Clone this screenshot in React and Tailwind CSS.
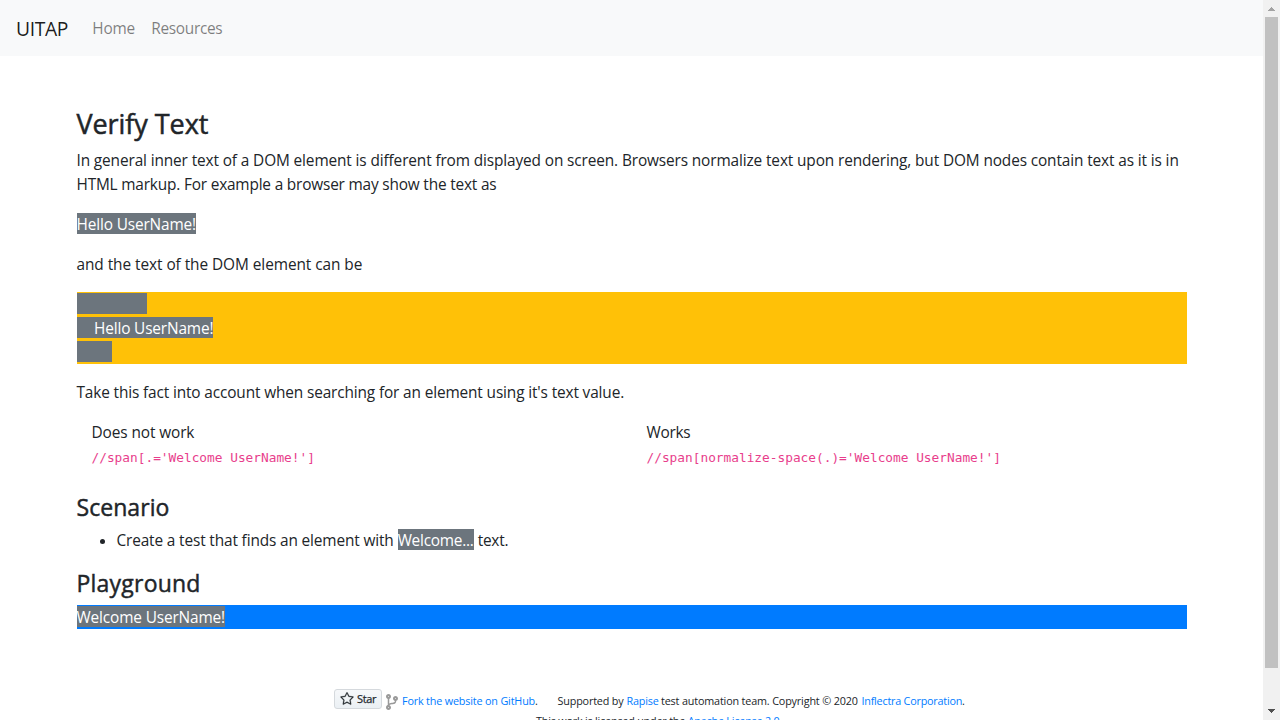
import { GoStar } from "react-icons/go";
import { FaCodeBranch } from "react-icons/fa";

function Mark({ className = "", children }) {
  return <span className={`inline-block h-[21px] bg-[#6c757d] leading-[23px] text-white ${className}`}>{children}</span>;
}

function Link({ className = "", children }) {
  return <a href="#" className={`text-[#007bff] ${className}`}>{children}</a>;
}

function Navbar() {
  return (
    <nav className="flex h-14 items-center bg-[#f8f9fa] px-4 pt-0.5">
      <a href="#" className="mr-4 w-[52.3px] text-[19.25px] tracking-[-0.36px] text-black/90">UITAP</a>
      <a href="#" className="w-[59px] px-2 tracking-[-0.25px] text-black/50">Home</a>
      <a href="#" className="px-2 tracking-[-0.31px] text-black/50">Resources</a>
    </nav>
  );
}

function Scrollbar() {
  return (
    <div className="flex h-full w-[17px] shrink-0 flex-col items-center bg-[#f1f1f1]">
      <svg width="17" height="17" viewBox="0 0 17 17" shapeRendering="crispEdges" fill="#a3a3a3">
        <path d="M8 7h1v1h1v1h1v1h1v1H5v-1h1V9h1V8h1z" />
      </svg>
      <div className="h-[651px] w-[13px] bg-[#c1c1c1]" />
      <div className="grow" />
      <svg width="17" height="17" viewBox="0 0 17 17" shapeRendering="crispEdges" fill="#505050">
        <path d="M5 6h7v1h-1v1h-1v1H9v1H8V9H7V8H6V7H5z" />
      </svg>
    </div>
  );
}

function Footer() {
  return (
    <footer className="mt-[60px] whitespace-nowrap text-[10.8px] leading-5">
      <div className="flex h-5 items-center pl-[334px]">
        <a href="#" className="flex h-5 w-12 items-center rounded-[3px] border border-[#d5d9dd] bg-linear-to-b from-[#f6f8fa] to-[#ebf0f4] pl-[5px] text-[11px] text-[#24292e]">
          <GoStar className="mr-[3px] size-3.5 shrink-0 stroke-[#24292e] stroke-[0.5px]" />
          <span className="tracking-[-0.35px] [-webkit-text-stroke:0.25px]">Star</span>
        </a>
        <FaCodeBranch className="mt-[6px] ml-1 h-4 w-3 text-[#999999]" />
        <div className="mt-1 ml-1 flex">
          <span className="w-[155.5px]"><Link className="tracking-[-0.17px]">Fork the website on GitHub</Link>.</span>
          <span className="w-[69px] tracking-[-0.17px]">Supported by</span>
          <Link className="w-[34.5px] tracking-[-0.17px]">Rapise</Link>
          <span className="w-[200.5px] tracking-[-0.16px]">test automation team. Copyright © 2020</span>
          <span><Link className="tracking-[-0.22px]">Inflectra Corporation</Link>.</span>
        </div>
      </div>
      <div className="mt-[2px] pl-[536px] tracking-[-0.2px]">
        This work is licensed under the <Link>Apache License 2.0</Link>.
      </div>
    </footer>
  );
}

export default function App() {
  return (
    <div className="flex h-[720px] w-[1280px] overflow-hidden bg-white font-['Open_Sans','Noto_Sans',sans-serif] text-[15.4px] leading-6 text-[#212529]">
      <div className="h-full min-w-0 grow overflow-hidden">
        <Navbar />
        <main className="mx-[76.5px] whitespace-nowrap pt-[51.4px]">
          <h3 className="mb-2 text-[27px] leading-[33.6px] tracking-[-0.07px] [-webkit-text-stroke:0.5px]">Verify Text</h3>
          <p className="mb-4">
            <span className="tracking-[-0.122px]">In general inner text of a DOM element is different from displayed on screen. Browsers normalize text upon rendering, but DOM nodes contain text as it is in</span>
            <br />
            <span className="tracking-[-0.182px]">HTML markup. For example a browser may show the text as</span>
          </p>
          <p className="mb-4 h-6"><Mark className="tracking-[-0.14px]">Hello UserName!</Mark></p>
          <p className="mb-4 tracking-[-0.058px]">and the text of the DOM element can be</p>
          <div className="-mt-px mb-[17px] h-[72px] bg-[#ffc107] pt-px tracking-[-0.15px]">
            <div className="h-6 whitespace-pre"><Mark className="[word-spacing:0.53px]">{" ".repeat(16)}</Mark></div>
            <div className="h-6"><Mark className="pl-[17.5px]">Hello UserName!</Mark></div>
            <div className="h-6 whitespace-pre"><Mark className="[word-spacing:0.53px]">{" ".repeat(8)}</Mark></div>
          </div>
          <p className="mb-4 tracking-[-0.135px]">Take this fact into account when searching for an element using it's text value.</p>
          <div className="mb-[23px] grid grid-cols-2">
            <div className="px-[15px]">
              <div className="tracking-[-0.1px]">Does not work</div>
              <code className="block pt-px font-['DejaVu_Sans_Mono',monospace] text-[12.8px] text-[#e83e8c]">//span[.='Welcome UserName!']</code>
            </div>
            <div className="px-[15px]">
              <div className="tracking-[-0.25px]">Works</div>
              <code className="block pt-px font-['DejaVu_Sans_Mono',monospace] text-[12.8px] text-[#e83e8c]">//span[normalize-space(.)='Welcome UserName!']</code>
            </div>
          </div>
          <h4 className="mb-[7px] text-[23px] leading-[28.8px] tracking-[0.05px] [-webkit-text-stroke:0.45px]">Scenario</h4>
          <ul className="mb-4 list-disc pl-10">
            <li className="h-6">
              <span className="tracking-[-0.14px]">Create a test that finds an element with</span>{" "}
              <Mark className="tracking-[-0.24px]">Welcome...</Mark> <span className="tracking-[-0.2px]">text.</span>
            </li>
          </ul>
          <h4 className="mb-2 text-[23px] leading-[28.8px] tracking-[0.22px] [-webkit-text-stroke:0.45px]">Playground</h4>
          <div className="-mt-px h-6 bg-[#007bff] pt-px"><Mark className="tracking-[-0.14px]">Welcome UserName!</Mark></div>
        </main>
        <Footer />
      </div>
      <Scrollbar />
    </div>
  );
}
